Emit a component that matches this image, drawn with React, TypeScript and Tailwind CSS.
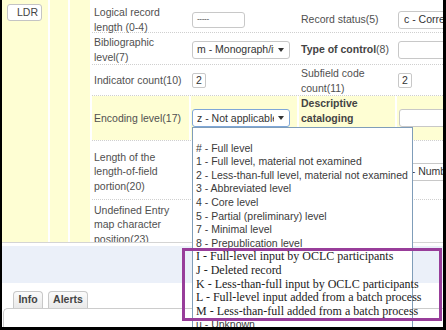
import React from "react";

const levels: { text: string; serif?: boolean }[] = [
  { text: "" },
  { text: "# - Full level" },
  { text: "1 - Full level, material not examined" },
  { text: "2 - Less-than-full level, material not examined" },
  { text: "3 - Abbreviated level" },
  { text: "4 - Core level" },
  { text: "5 - Partial (preliminary) level" },
  { text: "7 - Minimal level" },
  { text: "8 - Prepublication level" },
  { text: "I - Full-level input by OCLC participants", serif: true },
  { text: "J - Deleted record", serif: true },
  { text: "K - Less-than-full input by OCLC participants", serif: true },
  { text: "L - Full-level input added from a batch process", serif: true },
  { text: "M - Less-than-full added from a batch process", serif: true },
  { text: "u - Unknown" },
  { text: "z - Not applicable" },
];

function Caret() {
  return (
    <svg width="6" height="4" viewBox="0 0 6 4" className="shrink-0">
      <path d="M0 0h6L3 4z" fill="#333" />
    </svg>
  );
}

function Row({ className, children }: { className: string; children: React.ReactNode }) {
  return (
    <div className={`flex gap-[2px] border-b border-dotted border-[#cfcfcf] ${className}`}>
      {children}
    </div>
  );
}

function Cell({ className, children }: { className: string; children?: React.ReactNode }) {
  return <div className={`flex shrink-0 items-center ${className}`}>{children}</div>;
}

export default function App() {
  return (
    <div className="relative h-[330px] w-[446px] overflow-hidden border-b-[3px] border-l-2 border-r-[3px] border-black bg-white font-['Liberation_Sans',Arial,sans-serif] text-[10.5px] text-[#505050]">
      <div className="flex h-full flex-col">
        {/* record grid */}
        <div className="flex h-[243px] shrink-0 border-b border-[#d4d4d4]">
          <div className="flex shrink-0 gap-[2px] pr-[2px]">
            <div className="w-[46px] bg-[#fefed3] pl-[5px] pt-[4px]">
              <div className="flex h-[17px] w-[35px] items-center justify-end rounded-[3px] border border-[#c4c4c4] bg-white pr-[3px] text-[#444]">
                LDR
              </div>
            </div>
            <div className="w-[18px] bg-[#fefed3]" />
            <div className="w-[20px] bg-[#fefed3]" />
          </div>

          <div className="min-w-0 flex-1 overflow-hidden leading-[14.5px]">
            <Row className="h-[33px] pt-[7px]">
              <Cell className="w-[97px] pl-[2px]">
                <div>Logical record<br />length (0-4)</div>
              </Cell>
              <Cell className="w-[106px] pl-[1px]">
                <div className="flex h-[16px] w-[53px] items-center rounded-[3px] border border-[#c8c8c8] bg-white pl-[4px] text-[8px] tracking-[-0.3px] text-[#333]">
                  -----
                </div>
              </Cell>
              <Cell className="w-[96px] pl-[2px]">Record status(5)</Cell>
              <Cell className="flex-1 pl-[1px]">
                <div className="flex h-[18px] w-[90px] items-center whitespace-nowrap rounded-[3px] border border-[#c8c8c8] bg-white pl-[5px] text-[#333]">
                  c - Corrected or revised
                </div>
              </Cell>
            </Row>

            <Row className="h-[32px] pt-[2px]">
              <Cell className="w-[97px] pl-[2px]">
                <div>Bibliographic<br />level(7)</div>
              </Cell>
              <Cell className="w-[106px] pl-[1px]">
                <div className="flex h-[18px] w-[98px] items-center gap-[4px] rounded-[3px] border border-[#c8c8c8] bg-white pl-[4px] pr-[5px] text-[#333]">
                  <span className="flex-1 overflow-hidden whitespace-nowrap">m - Monograph/item</span>
                  <Caret />
                </div>
              </Cell>
              <Cell className="w-[96px] pl-[2px]">
                <div>
                  <b className="text-[#444]">Type of control</b>(8)
                </div>
              </Cell>
              <Cell className="flex-1 pl-[1px]">
                <div className="h-[18px] w-[90px] rounded-[3px] border border-[#c8c8c8] bg-white" />
              </Cell>
            </Row>

            <Row className="h-[31px] pt-[1px]">
              <Cell className="w-[97px] pl-[2px]">Indicator count(10)</Cell>
              <Cell className="w-[106px] pl-[1px]">
                <div className="flex h-[15px] w-[14px] items-center rounded-[2px] border border-[#c8c8c8] bg-white pl-[3px] text-[#333]">
                  2
                </div>
              </Cell>
              <Cell className="w-[96px] pl-[2px]">
                <div>Subfield code<br />count(11)</div>
              </Cell>
              <Cell className="flex-1 pl-[1px]">
                <div className="flex h-[15px] w-[14px] items-center rounded-[2px] border border-[#c8c8c8] bg-white pl-[3px] text-[#333]">
                  2
                </div>
              </Cell>
            </Row>

            <Row className="h-[45px]">
              <Cell className="w-[97px] bg-[#fefed3] pl-[2px]">Encoding level(17)</Cell>
              <Cell className="w-[106px] bg-[#fefed3] pl-[1px]">
                <div className="flex h-[18px] w-[98px] items-center gap-[4px] rounded-[3px] border border-[#7fa7d8] bg-white pl-[4px] pr-[5px] text-[#333]">
                  <span className="flex-1 overflow-hidden whitespace-nowrap">z - Not applicable</span>
                  <Caret />
                </div>
              </Cell>
              <Cell className="w-[96px] bg-[#fefed3] pl-[2px]">
                <div>
                  <b className="text-[#444]">Descriptive<br />cataloging<br />form</b>(18)
                </div>
              </Cell>
              <Cell className="flex-1 bg-[#fefed3] pl-[2px]">
                <div className="h-[18px] w-[90px] rounded-[3px] border border-[#c8c8c8] bg-white" />
              </Cell>
            </Row>

            <Row className="h-[59px] pt-[3px]">
              <Cell className="w-[97px] pl-[2px]">
                <div>Length of the<br />length-of-field<br />portion(20)</div>
              </Cell>
              <Cell className="w-[106px] pl-[1px]" />
              <Cell className="w-[96px] pl-[2px]" />
              <Cell className="flex-1 pl-[1px]">
                <div className="flex h-[18px] w-[90px] items-center whitespace-nowrap rounded-[3px] border border-[#c8c8c8] bg-white pl-[4px] text-[#333]">
                  4 - Number of characters
                </div>
              </Cell>
            </Row>

            <Row className="h-[50px]">
              <Cell className="w-[97px] pl-[2px]">
                <div>Undefined Entry<br />map character<br />position(23)</div>
              </Cell>
            </Row>
          </div>
        </div>

        {/* lower panels */}
        <div className="h-[3px] shrink-0" />
        <div className="h-[37px] shrink-0 bg-[#ebf0f9]" />
        <div className="h-[7px] shrink-0" />
        <div className="flex h-[18px] shrink-0 items-end gap-[5px] pl-[11px]">
          <div className="flex h-[17px] w-[30px] items-center justify-center rounded-t-[4px] border border-b-0 border-[#c8c8c8] bg-gradient-to-b from-[#fbfbfb] to-[#e9e9e9] font-bold text-[#444]">
            Info
          </div>
          <div className="flex h-[17px] w-[40px] items-center justify-center rounded-t-[4px] border border-b-0 border-[#c8c8c8] bg-gradient-to-b from-[#fbfbfb] to-[#e9e9e9] font-bold text-[#444]">
            Alerts
          </div>
        </div>
        <div className="ml-[1px] flex-1 rounded-tl-[5px] border-l border-t border-[#cccccc]" />
      </div>

      {/* open encoding level list */}
      <div className="absolute left-[190px] top-[127px] h-[215px] w-[221px] border border-[#7f9db9] bg-white text-[#3a3a3a]">
        {levels.map((l, i) => (
          <div
            key={i}
            className={
              l.serif
                ? "h-[13.6px] whitespace-nowrap pl-[3px] font-['Liberation_Serif','Times_New_Roman',serif] text-[12px] leading-[13.6px] text-[#222]"
                : "h-[13.6px] whitespace-nowrap pl-[3px] leading-[13.6px]"
            }
          >
            {l.text}
          </div>
        ))}
      </div>

      {/* highlight box */}
      <div className="absolute left-[180px] top-[248px] h-[73px] w-[260px] border-[3px] border-[#983d9a]" />
    </div>
  );
}
